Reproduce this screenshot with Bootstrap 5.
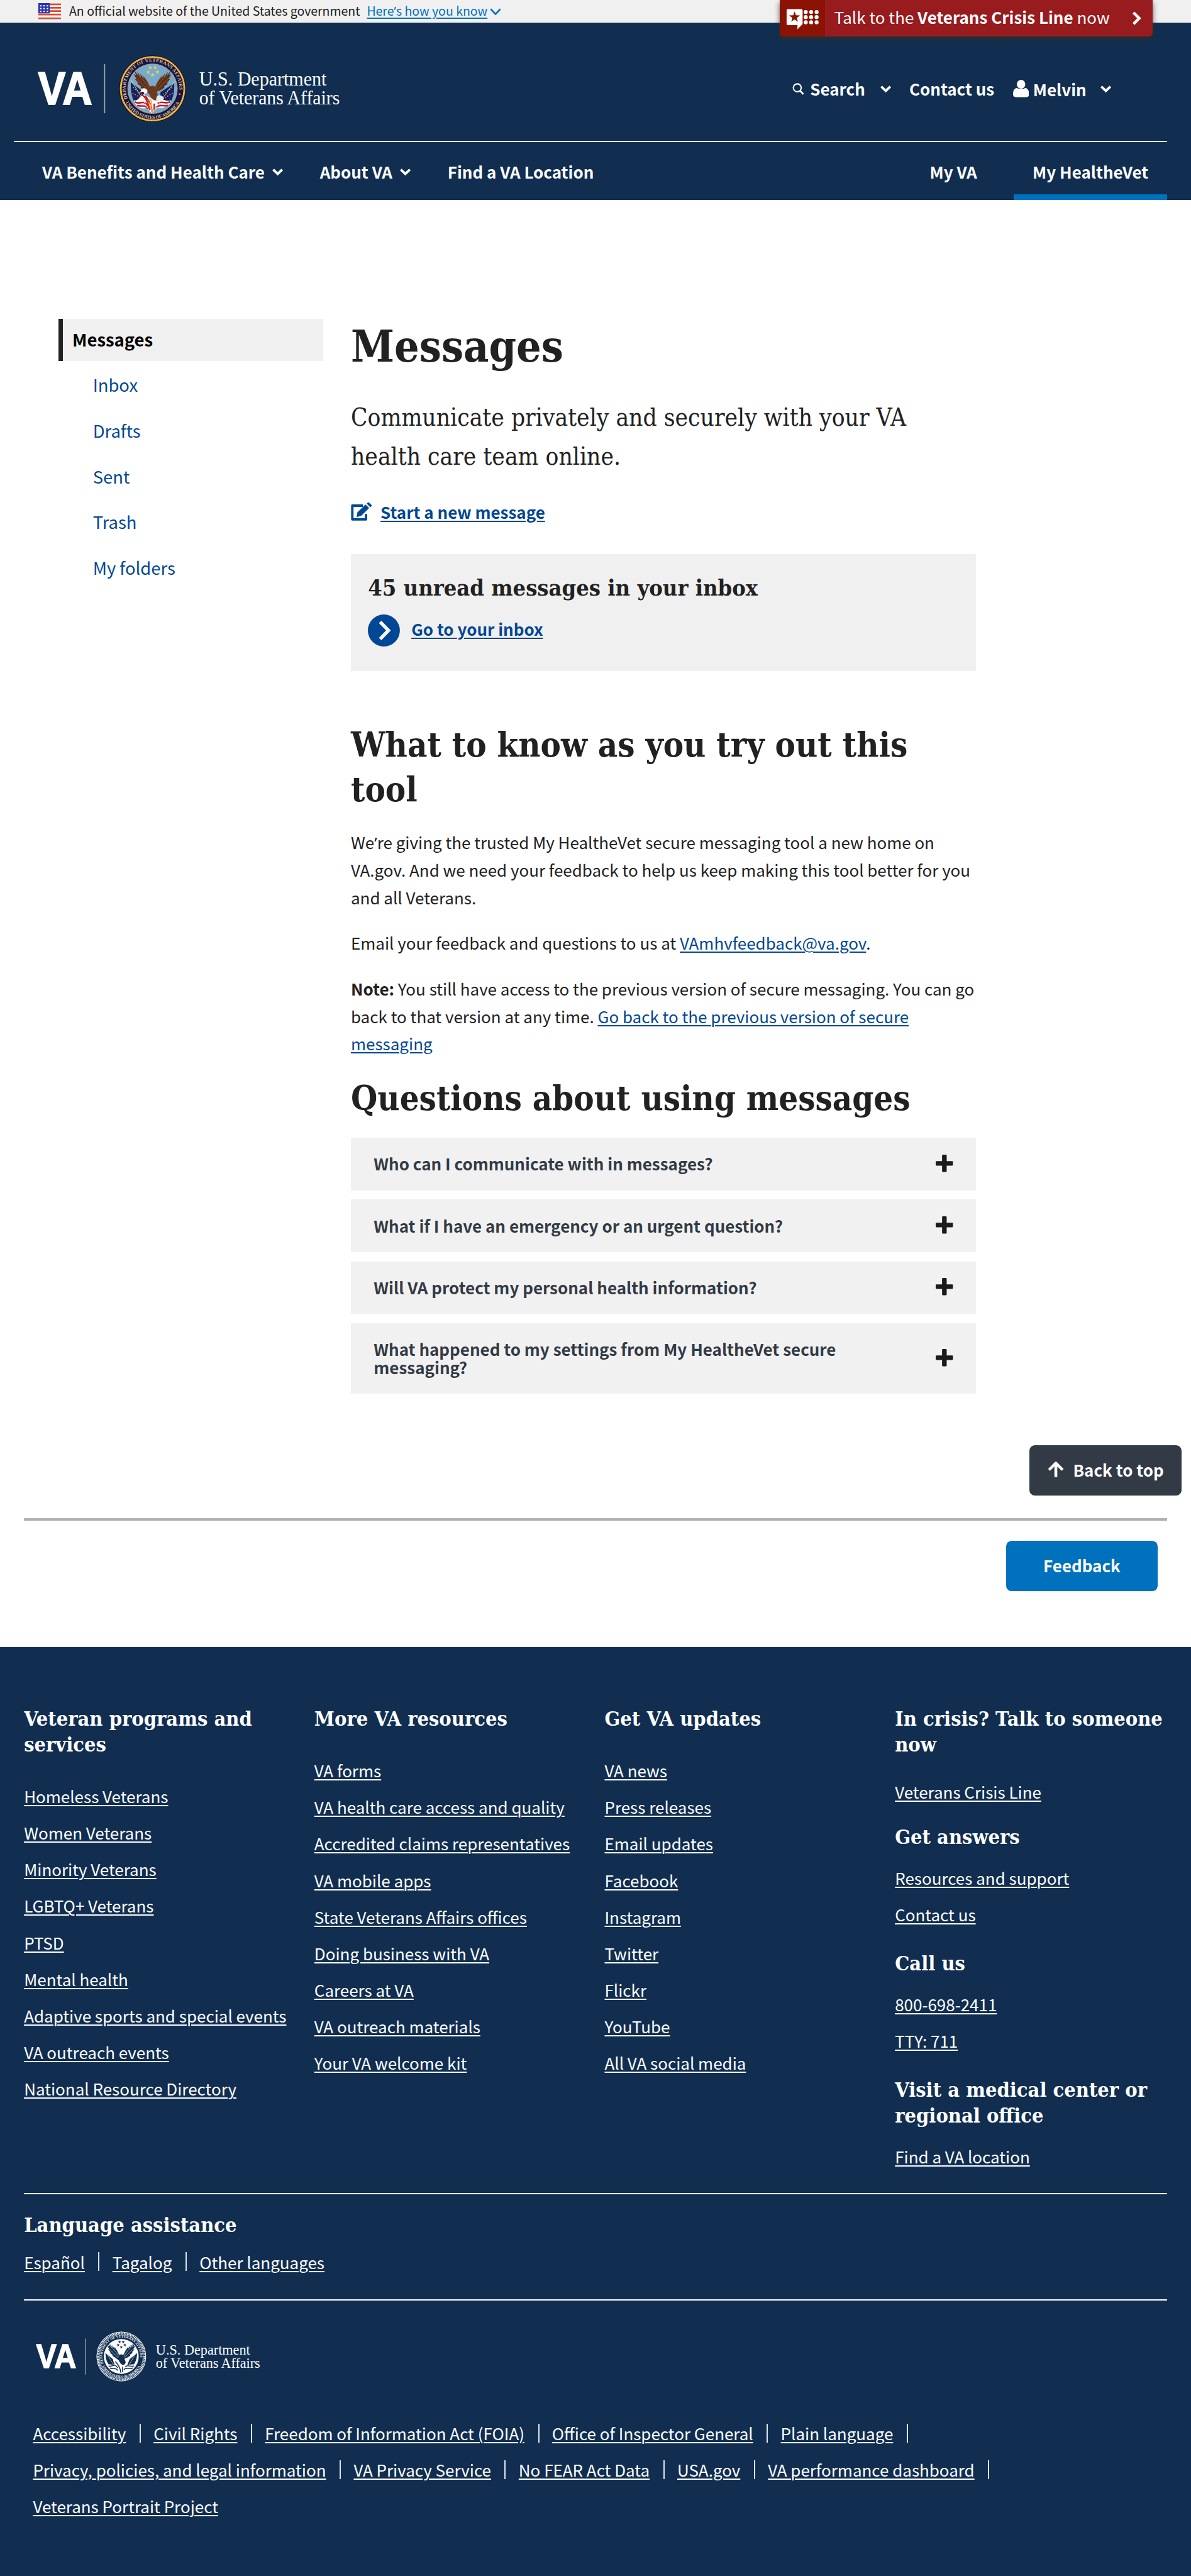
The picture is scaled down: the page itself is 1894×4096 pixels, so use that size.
<!doctype html>
<html lang="en">
<head>
<meta charset="utf-8">
<meta name="viewport" content="width=device-width, initial-scale=1">
<title>Messages | Veterans Affairs</title>
<link href="https://cdn.jsdelivr.net/npm/bootstrap@5.3.0/dist/css/bootstrap.min.css" rel="stylesheet">
<style>
  :root { font-size: 29.0825px; --navy: #112e51; --link: #004795; --gray: #f0f0f0; --ink: #212121; }
  body { font-family: "Noto Sans CJK SC", "Noto Sans", sans-serif; font-size: .893rem; line-height: 1.5rem; color: var(--ink); min-height: 100vh; }
  a { color: var(--link); text-underline-offset: .13em; text-decoration-thickness: 2px; }
  a:hover { color: var(--link); }
  svg { display: block; flex: none; }
  .slab { font-family: "DejaVu Serif Condensed", "DejaVu Serif", serif; font-weight: 700; margin: 0; }
  .apos { font-family: "Noto Sans", sans-serif; line-height: 0; }
  .bg-navy { background: var(--navy); }

  .gov-banner { height: 1.25rem; background: var(--gray); padding-left: 2.094rem; font-size: .671rem; }
  .gov-banner .flag { width: 1.25rem; height: .906rem; }
  .gov-banner .txt { padding-bottom: .1rem; margin-left: .44rem; }
  .gov-banner a { color: #0071bc; margin-left: .37rem; }
  .gov-banner .chev { width: .62rem; height: .39rem; margin-left: .13rem; }

  .crisis { top: 0; right: 2.094rem; width: 20.41rem; height: 2rem; background: #981b1e; color: #fff; border-radius: 0 0 .2rem .2rem; box-shadow: 0 .16rem .3rem rgba(50,45,40,.75); overflow: hidden; }
  .crisis .mk { width: 2.5rem; height: 2rem; background: #8b1303; }
  .crisis .txt { margin-left: .5rem; padding-bottom: .13rem; }
  .crisis .arrow { width: .56rem; height: .83rem; margin-left: auto; margin-right: .625rem; }

  .brand-row { height: 6.4375rem; padding: .77rem 4.34rem 0 1.875rem; }
  .brand-logo { width: 17.1875rem; height: 4.0625rem; }
  .chev-sm { width: .66rem; height: .42rem; }
  .tool { font-weight: 700; color: #fff; }
  .main-nav { height: 3.25rem; margin: 0 1.3125rem 0 .75rem; border-top: 2px solid #fff; padding-left: 1.556rem; font-weight: 700; }
  .main-nav a { color: #fff; text-decoration: none; padding-top: .07rem; }
  .main-nav .right a { height: 100%; padding: .1rem 1.02rem 0; border-bottom: .3125rem solid transparent; border-top: .3125rem solid transparent; }
  .main-nav .right a.active { border-bottom-color: #0071bc; }

  .page-body { padding: 6.5rem 0 0 3.1875rem; gap: 1.5rem; }
  .side { width: 14.5rem; font-size: .943rem; }
  .side a { display: flex; align-items: center; height: 2.5rem; padding-left: 1.89rem; text-decoration: none; }
  .side a.active { height: 2.3rem; margin-bottom: .06rem; padding: 0 0 .08rem .53rem; background: var(--gray); border-left: .25rem solid var(--ink); color: #000; font-weight: 700; }
  .content { width: 34.1875rem; }
  h1.slab { font-size: 2.386rem; line-height: 3rem; margin-top: 0; }
  .intro { font-family: "DejaVu Serif Condensed", "DejaVu Serif", serif; font-size: 1.328rem; line-height: 2.125rem; margin: 1.34rem 0 0; }
  .compose { margin-top: 1.21rem; font-weight: 700; }
  .compose svg { width: 1.15rem; height: 1rem; margin-right: .47rem; }
  .unread { margin-top: 1.573rem; height: 6.375rem; background: var(--gray); padding: 1rem .9375rem 0; }
  .unread h2 { font-size: 1.238rem; line-height: 1.625rem; }
  .unread .go { margin-top: .67rem; height: 1.75rem; font-weight: 700; }
  .unread .go svg { width: 1.75rem; height: 1.75rem; margin-right: .62rem; }
  .unread .go a { padding-bottom: .19rem; }
  .content > h2 { font-size: 1.858rem; line-height: 2.4375rem; }
  .content p.copy { margin: 0 0 1rem; }
  .faq { display: flex; flex-direction: column; gap: .5rem; margin-top: .926rem; }
  .faq button { border: 0; background: #f1f1f1; text-align: left; min-height: 2.875rem; padding: .9rem 1.25rem .975rem; color: #323a45; font-weight: 700; line-height: 1rem; }
  .faq button svg { width: .95rem; height: .95rem; }
  .faq .lbl { max-width: 28rem; }

  .top-wrap { margin-top: 2.8125rem; padding-right: .5rem; }
  .va-btn { height: 2.75rem; border-radius: .3rem; color: #fff; font-weight: 700; padding: 0 0 .1rem; border: 0; }
  .btn-top { width: 8.34rem; background: #323a45; }
  .btn-top svg { width: .9rem; height: .92rem; margin-right: .5rem; }
  .btn-fb { width: 8.31rem; background: #0071bc; }
  .rule { height: 4px; background: #aeb0b5; margin: 1.25rem 1.3125rem 1.09rem; }
  .fb-wrap { padding-right: 1.8125rem; margin-bottom: 3.0625rem; }

  .foot { padding: 3.24rem 1.3125rem 1.5rem; color: #fff; }
  .foot a { color: #fff; text-decoration-thickness: 2px; }
  .foot .slab { font-size: 1.112rem; line-height: 1.409rem; }
  .foot-col { width: 15.875rem; flex: none; }
  .foot-col:last-child { width: 14.875rem; }
  .foot-col ul { list-style: none; padding: 0; margin: 1.08rem 0 0; }
  .foot-col li { height: 2rem; display: flex; align-items: center; white-space: nowrap; }
  .foot-col.tight ul { margin-top: .51rem; }
  .foot-col.tight ul:first-of-type { margin-top: .85rem; }
  .foot-rule { border-top: 2px solid #fff; }
  .bar-list { list-style: none; padding: 0; margin: 0; display: flex; flex-wrap: wrap; }
  .bar-list li { display: flex; align-items: center; }
  .bar-list.sep li::after { content: ""; width: 2px; height: 1.03rem; background: #dfe4ea; margin: 0 .7rem 0 .74rem; }
  .bar-list.sep li:last-child::after { display: none; }
  .foot-logo { width: 12.75rem; height: 3rem; margin: 1.55rem 0 1.72rem .469rem; }
  .legal { padding-left: .49rem; }
  .legal li { height: 2rem; }
</style>
<script src="https://cdn.jsdelivr.net/npm/bootstrap@5.3.0/dist/js/bootstrap.bundle.min.js"></script>
</head>
<body class="d-flex flex-column">

<svg width="0" height="0" class="position-absolute" aria-hidden="true">
  <defs>
    <symbol id="chev" viewBox="0 0 21 13"><path d="M2.6 2.6 10.5 10.2 18.4 2.6" fill="none" stroke="currentColor" stroke-width="4.2"/></symbol>
    <symbol id="plus" viewBox="0 0 30 30"><path d="M12.500 0h5a1.500 1.500 0 0 1 1.500 1.500v9.500h9.500a1.500 1.500 0 0 1 1.500 1.500v5a1.500 1.500 0 0 1-1.500 1.500h-9.500v9.500a1.500 1.500 0 0 1-1.500 1.500h-5a1.500 1.500 0 0 1-1.500-1.500v-9.500h-9.500a1.500 1.500 0 0 1-1.500-1.500v-5a1.500 1.500 0 0 1 1.500-1.500h9.500v-9.500a1.500 1.500 0 0 1 1.500-1.500z" fill="#1b1b1b"/></symbol>
    <path id="star5" d="M0-4 .95-1.300 3.800-1.240 1.540.5 2.350 3.240 0 1.600-2.350 3.240-1.540.5-3.800-1.240-.95-1.300z"/>
    <path id="arcTop" d="M-43.500 17.500A47 47 0 1 1 43.500 17.500"/>
    <path id="arcBot" d="M-49 20.500A53.200 53.200 0 0 0 49 20.500"/>
    <path id="wing" d="M-2 2C-8-8-9-16-17-23L-15-17-22-27-20-20-27-30-25-23-32-32-29-24-33-25-28-17-31-17-25-10-27-9-20-4-21-2C-14 3-9 5-4 6z"/>
  </defs>
</svg>

<div class="gov-banner d-flex align-items-center">
  <svg class="flag" viewBox="0 0 40 29">
    <rect width="40" height="29" fill="#fff"/>
    <path d="M0 2h40M0 8h40M0 14h40M0 20h40M0 26.500h40" stroke="#e04b32" stroke-width="3"/>
    <rect width="20" height="18" fill="#2632b0"/>
    <path d="M3 4.500h15M3 9.500h15M3 14.500h15" stroke="#fff" stroke-width="2.600" stroke-dasharray="2.600 3.200"/>
  </svg>
  <span class="txt">An official website of the United States government<a href="#">Here<span class="apos">’</span>s how you know</a></span>
  <svg class="chev" viewBox="0 0 20 12.500"><path d="M1.500 1.500 10 10.500 18.500 1.500" fill="none" stroke="#0071bc" stroke-width="3"/></svg>
</div>

<a href="#" class="crisis position-absolute d-flex align-items-center text-decoration-none">
  <span class="mk">
    <svg width="100%" height="100%" viewBox="0 0 80 64">
      <path d="M14 16h24a2 2 0 0 1 2 2v24l-9 9.500v-7.500H14a2 2 0 0 1-2-2V18a2 2 0 0 1 2-2z" fill="#fff"/>
      <use href="#star5" transform="translate(26 30) scale(2.500)" fill="#8b1303"/>
      <g fill="#fff"><circle cx="45.500" cy="21" r="3.500"/><circle cx="55" cy="21" r="3.500"/><circle cx="64.500" cy="21" r="3.500"/><circle cx="45.500" cy="30" r="3.500"/><circle cx="55" cy="30" r="3.500"/><circle cx="64.500" cy="30" r="3.500"/><circle cx="45.500" cy="39" r="3.500"/><circle cx="55" cy="39" r="3.500"/><circle cx="64.500" cy="39" r="3.500"/></g>
    </svg>
  </span>
  <span class="txt">Talk to the <strong>Veterans Crisis Line</strong> now</span>
  <svg class="arrow" viewBox="0 0 18 26"><path d="M4 3 14 13 4 23" fill="none" stroke="#fff" stroke-width="5"/></svg>
</a>

<header class="bg-navy text-white">
  <div class="brand-row d-flex align-items-center">
    <svg class="brand-logo" viewBox="60 90 550 130">
      <text x="66" y="182.700" font-family="Liberation Sans, sans-serif" font-weight="700" font-size="82" fill="#fff" stroke="#fff" stroke-width="2.200" textLength="95" lengthAdjust="spacingAndGlyphs">VA</text>
      <rect x="181.500" y="112" width="2" height="86" fill="#98a4b3"/>
      <g transform="translate(266.400 155)">
        <circle r="58.500" fill="#17103c"/>
        <circle r="55.500" fill="none" stroke="#e0a82e" stroke-width="3.200"/>
        <circle r="55.500" fill="none" stroke="#f6dc8a" stroke-width="1.200" stroke-dasharray="2 2"/>
        <circle r="53.500" fill="#1b1247"/>
        <circle r="43.500" fill="#78aacb" stroke="#c9b370" stroke-width=".8"/>
        <g font-family="Liberation Serif, serif" font-weight="700" font-size="8.600" fill="#d3c283">
          <text><textPath href="#arcTop" textLength="168">DEPARTMENT OF VETERANS AFFAIRS</textPath></text>
          <text><textPath href="#arcBot" startOffset="4" textLength="116">UNITED STATES OF AMERICA</textPath></text>
        </g>
        <circle cx="-47.500" cy="9.500" r="1.300" fill="#d3c283"/><circle cx="47.500" cy="9.500" r="1.300" fill="#d3c283"/>
        <g fill="#e9cf5f"><use href="#star5" x="-4" y="-37"/><use href="#star5" x="4.500" y="-37"/><use href="#star5" x="-7.500" y="-29"/><use href="#star5" x="8.500" y="-29"/><use href="#star5" y="-24"/></g>
        <path d="M-38-11-15 6-10 26-33 21C-38 10-38 0-38-11z" fill="#1d2156"/>
        <path d="M38-10 14 6 12 24 33 21C38 10 38 0 38-10z" fill="#1d2156"/>
        <path d="M-34-2l18 14M-35 8l18 10M34-2 18 10M35 8 18 18" stroke="#e8ecf5" stroke-width="1.300" stroke-dasharray="1.500 3"/>
        <path d="M-33 20C-25 24-20 8-14 10L6 22C12 14 26 24 33 20 28 34 16 34 8 34L-2 42-10 34C-20 36-29 32-33 20z" fill="#fff"/>
        <path d="M-31 23C-24 29-16 18-8 30M-27 29C-20 33-14 26-8 35M-20 11C-12 12-8 24-5 38M-13 12C-8 18-2 28-1 40M31 23C22 28 16 20 9 26M27 29C20 32 12 26 6 33M3 26 3 38" fill="none" stroke="#c4202d" stroke-width="2.900"/>
        <path d="M-38-16-4 41M39-13 0 42" stroke="#efe3b0" stroke-width="1"/>
        <g fill="#5f3018"><use href="#wing"/><use href="#wing" transform="scale(-1 1)"/></g>
        <g fill="none" stroke="#9a6237" stroke-width="1"><path d="M-6 0C-12-10-16-16-27-25M-8 3C-14-4-20-10-27-17M6 0C12-10 16-16 27-25M8 3C14-4 20-10 27-17M-4-2C-8-12-12-18-20-24M4-2C8-12 12-18 20-24"/></g>
        <path d="M-14 3C-10-4-4-4 0-5 5-5 9 2 8 8 12 12 10 18 5 20 0 20-4 14-6 9z" fill="#6d3a1e"/>
        <path d="M-20 2C-18-2-12-2-9 3-8 7-12 10-15 8-14 5-18 5-21 6z" fill="#fff"/><path d="M-20 3-23 7-19 6z" fill="#e9b53a"/>
        <path d="M8 12C14 10 19 13 20 18 16 22 11 22 6 20z" fill="#e7eaf0"/>
        <path d="M-7 20C-2 16 0 26-3 30M-5 24-1 40" fill="none" stroke="#e9b53a" stroke-width="2"/>
      </g>
      <g font-family="Liberation Serif, serif" font-size="35" fill="#fff">
        <text x="348" y="149.300" textLength="223" lengthAdjust="spacingAndGlyphs">U.S. Department</text>
        <text x="348" y="182.700" textLength="246" lengthAdjust="spacingAndGlyphs">of Veterans Affairs</text>
      </g>
    </svg>
    <div class="d-flex align-items-center ms-auto">
      <svg width="19" height="19" viewBox="0 0 20 20"><circle cx="8.300" cy="8" r="6.600" fill="none" stroke="#fff" stroke-width="2.200"/><path d="M13 13 18.500 18.700" stroke="#fff" stroke-width="2.800"/></svg>
      <span class="tool" style="margin-left:.31rem">Search</span>
      <svg class="chev-sm" style="margin-left:.78rem"><use href="#chev"/></svg>
      <span class="tool" style="margin-left:.97rem">Contact us</span>
      <svg width="25.500" height="27.500" viewBox="0 0 28 30" style="margin-left:1.02rem"><ellipse cx="14" cy="7.600" rx="7.400" ry="7.600" fill="#fff"/><path d="M6.500 14C9 16.500 19 16.500 21.500 14 26 15 28 19 28 25 28 28.500 26.500 30 23.500 30H4.500C1.500 30 0 28.500 0 25 0 19 2 15 6.500 14z" fill="#fff"/></svg>
      <span class="tool" style="margin-left:.22rem;padding-top:.07rem">Melvin</span>
      <svg class="chev-sm" style="margin-left:.72rem"><use href="#chev"/></svg>
    </div>
  </div>
  <nav class="main-nav d-flex align-items-center">
    <a href="#" class="d-flex align-items-center">VA Benefits and Health Care<svg class="chev-sm" style="margin-left:.39rem"><use href="#chev"/></svg></a>
    <a href="#" class="d-flex align-items-center" style="margin-left:1.97rem">About VA<svg class="chev-sm" style="margin-left:.39rem"><use href="#chev"/></svg></a>
    <a href="#" style="margin-left:1.97rem">Find a VA Location</a>
    <div class="right d-flex h-100 ms-auto">
      <a href="#" class="d-flex align-items-center me-3">My VA</a>
      <a href="#" class="d-flex align-items-center active">My HealtheVet</a>
    </div>
  </nav>
</header>

<main>
  <div class="page-body d-flex align-items-start">
    <nav class="side">
      <a href="#" class="active">Messages</a>
      <a href="#">Inbox</a>
      <a href="#">Drafts</a>
      <a href="#">Sent</a>
      <a href="#">Trash</a>
      <a href="#">My folders</a>
    </nav>
    <article class="content">
      <h1 class="slab">Messages</h1>
      <p class="intro">Communicate privately and securely with your VA health care team online.</p>
      <div class="compose d-flex align-items-center">
        <svg viewBox="0 0 36.800 32"><path d="M21 5.500H2.500V29.500H26.500V20" fill="none" stroke="#004795" stroke-width="4.200" stroke-linejoin="round"/><path d="M10 25.500 11.500 17 25.500 3.500 32 9.500 18 23.500z" fill="#004795"/><path d="M27.500 2 29 .7a2.500 2.500 0 0 1 3.500 0L35.500 3.600a2.500 2.500 0 0 1 0 3.500L34 8.300z" fill="#004795"/></svg>
        <a href="#">Start a new message</a>
      </div>
      <section class="unread">
        <h2 class="slab">45 unread messages in your inbox</h2>
        <div class="go d-flex align-items-center">
          <svg viewBox="0 0 56 56"><circle cx="28" cy="28" r="28" fill="#004795"/><path d="M21.500 13 36 28 21.500 43" fill="none" stroke="#fff" stroke-width="6"/></svg>
          <a href="#">Go to your inbox</a>
        </div>
      </section>
      <h2 class="slab" style="margin:2.82rem 0 .92rem">What to know as you try out this tool</h2>
      <p class="copy">We<span class="apos">’</span>re giving the trusted My HealtheVet secure messaging tool a new home on VA.gov. And we need your feedback to help us keep making this tool better for you and all Veterans.</p>
      <p class="copy">Email your feedback and questions to us at <a href="#">VAmhvfeedback@va.gov</a>.</p>
      <p class="copy"><strong>Note:</strong> You still have access to the previous version of secure messaging. You can go back to that version at any time. <a href="#">Go back to the previous version of secure messaging</a></p>
      <h2 class="slab" style="margin-top:1.05rem">Questions about using messages</h2>
      <div class="faq">
        <button class="d-flex align-items-center justify-content-between"><span class="lbl">Who can I communicate with in messages?</span><svg><use href="#plus"/></svg></button>
        <button class="d-flex align-items-center justify-content-between"><span class="lbl">What if I have an emergency or an urgent question?</span><svg><use href="#plus"/></svg></button>
        <button class="d-flex align-items-center justify-content-between"><span class="lbl">Will VA protect my personal health information?</span><svg><use href="#plus"/></svg></button>
        <button class="d-flex align-items-center justify-content-between"><span class="lbl">What happened to my settings from My HealtheVet secure messaging?</span><svg><use href="#plus"/></svg></button>
      </div>
    </article>
  </div>

  <div class="top-wrap d-flex justify-content-end">
    <button class="va-btn btn-top d-flex align-items-center justify-content-center"><svg viewBox="0 0 29 29"><path d="M2.500 15.500 14.500 3.500 26.500 15.500M14.500 5V28" fill="none" stroke="#fff" stroke-width="5" stroke-linejoin="round"/></svg>Back to top</button>
  </div>
  <div class="rule"></div>
  <div class="fb-wrap d-flex justify-content-end">
    <button class="va-btn btn-fb">Feedback</button>
  </div>
</main>

<footer class="foot bg-navy flex-grow-1">
  <div class="d-flex">
    <div class="foot-col">
      <h2 class="slab">Veteran programs and services</h2>
      <ul>
        <li><a href="#">Homeless Veterans</a></li>
        <li><a href="#">Women Veterans</a></li>
        <li><a href="#">Minority Veterans</a></li>
        <li><a href="#">LGBTQ+ Veterans</a></li>
        <li><a href="#">PTSD</a></li>
        <li><a href="#">Mental health</a></li>
        <li><a href="#">Adaptive sports and special events</a></li>
        <li><a href="#">VA outreach events</a></li>
        <li><a href="#">National Resource Directory</a></li>
      </ul>
    </div>
    <div class="foot-col">
      <h2 class="slab">More VA resources</h2>
      <ul>
        <li><a href="#">VA forms</a></li>
        <li><a href="#">VA health care access and quality</a></li>
        <li><a href="#">Accredited claims representatives</a></li>
        <li><a href="#">VA mobile apps</a></li>
        <li><a href="#">State Veterans Affairs offices</a></li>
        <li><a href="#">Doing business with VA</a></li>
        <li><a href="#">Careers at VA</a></li>
        <li><a href="#">VA outreach materials</a></li>
        <li><a href="#">Your VA welcome kit</a></li>
      </ul>
    </div>
    <div class="foot-col">
      <h2 class="slab">Get VA updates</h2>
      <ul>
        <li><a href="#">VA news</a></li>
        <li><a href="#">Press releases</a></li>
        <li><a href="#">Email updates</a></li>
        <li><a href="#">Facebook</a></li>
        <li><a href="#">Instagram</a></li>
        <li><a href="#">Twitter</a></li>
        <li><a href="#">Flickr</a></li>
        <li><a href="#">YouTube</a></li>
        <li><a href="#">All VA social media</a></li>
      </ul>
    </div>
    <div class="foot-col tight">
      <h2 class="slab">In crisis? Talk to someone now</h2>
      <ul><li><a href="#">Veterans Crisis Line</a></li></ul>
      <h2 class="slab" style="margin-top:.778rem">Get answers</h2>
      <ul><li><a href="#">Resources and support</a></li><li><a href="#">Contact us</a></li></ul>
      <h2 class="slab mt-3">Call us</h2>
      <ul><li><a href="#">800-698-2411</a></li><li><a href="#">TTY: 711</a></li></ul>
      <h2 class="slab mt-3">Visit a medical center or regional office</h2>
      <ul><li><a href="#">Find a VA location</a></li></ul>
    </div>
  </div>

  <div class="foot-rule mt-3"></div>
  <h2 class="slab mt-3">Language assistance</h2>
  <ul class="bar-list sep" style="margin:.75rem 0 1.53rem;line-height:1rem">
    <li><a href="#">Español</a></li><li><a href="#">Tagalog</a></li><li><a href="#">Other languages</a></li>
  </ul>
  <div class="foot-rule"></div>

  <svg class="foot-logo" viewBox="57 4076 408 96">
    <text x="63" y="4144.700" font-family="Liberation Sans, sans-serif" font-weight="700" font-size="59.500" fill="#fff" stroke="#fff" stroke-width="1.500" textLength="70.500" lengthAdjust="spacingAndGlyphs">VA</text>
    <rect x="149" y="4093" width="1.500" height="63" fill="#98a4b3"/>
    <g transform="translate(212 4124.400) scale(.745)">
      <circle r="57.500" fill="none" stroke="#fff" stroke-width="1.500"/>
      <circle r="54.500" fill="none" stroke="#fff" stroke-width="3.600" stroke-dasharray="2.200 1.500"/>
      <circle r="51.500" fill="none" stroke="#fff" stroke-width="1"/>
      <g font-family="Liberation Serif, serif" font-weight="700" font-size="8.400" fill="#fff">
        <text transform="scale(.95)"><textPath href="#arcTop" textLength="168">DEPARTMENT OF VETERANS AFFAIRS</textPath></text>
        <text transform="scale(.95)"><textPath href="#arcBot" startOffset="4" textLength="116">UNITED STATES OF AMERICA</textPath></text>
      </g>
      <circle r="41" fill="#fff"/>
      <g fill="#112e51"><use href="#star5" x="-4" y="-34"/><use href="#star5" x="4.500" y="-34"/><use href="#star5" x="-7.500" y="-27"/><use href="#star5" x="8.500" y="-27"/><use href="#star5" y="-22"/>
        <use href="#wing"/><use href="#wing" transform="scale(-1 1)"/>
        <path d="M-14 3C-10-4-4-4 0-5 5-5 9 2 8 8 12 12 10 18 5 20 0 20-4 14-6 9z"/>
        <path d="M-37-8-20 6-16 20-30 18C-36 10-37 0-37-8zM37-8 20 6 14 20 30 18C36 10 37 0 37-8z"/></g>
      <path d="M-30 22C-22 26-16 14-8 27M-27 27C-20 31-14 24-8 33M-14 12C-8 18-2 28-1 38M30 22C22 26 16 18 9 24M27 27C20 31 12 24 6 31M3 24V37" fill="none" stroke="#112e51" stroke-width="2.200"/>
      <g fill="none" stroke="#fff" stroke-width=".9"><path d="M-6 0C-12-10-16-16-27-25M-8 3C-14-4-20-10-27-17M6 0C12-10 16-16 27-25M8 3C14-4 20-10 27-17M-37-12-18 20M37-12 18 20"/></g>
    </g>
    <g font-family="Liberation Serif, serif" font-size="25.500" fill="#fff">
      <text x="272.500" y="4121" textLength="165" lengthAdjust="spacingAndGlyphs">U.S. Department</text>
      <text x="272.500" y="4144.500" textLength="182.500" lengthAdjust="spacingAndGlyphs">of Veterans Affairs</text>
    </g>
  </svg>

  <ul class="bar-list sep legal">
    <li><a href="#">Accessibility</a></li>
    <li><a href="#">Civil Rights</a></li>
    <li><a href="#">Freedom of Information Act (FOIA)</a></li>
    <li><a href="#">Office of Inspector General</a></li>
    <li><a href="#">Plain language</a></li>
    <li><a href="#">Privacy, policies, and legal information</a></li>
    <li><a href="#">VA Privacy Service</a></li>
    <li><a href="#">No FEAR Act Data</a></li>
    <li><a href="#">USA.gov</a></li>
    <li><a href="#">VA performance dashboard</a></li>
    <li><a href="#">Veterans Portrait Project</a></li>
  </ul>
</footer>
</body>
</html>
